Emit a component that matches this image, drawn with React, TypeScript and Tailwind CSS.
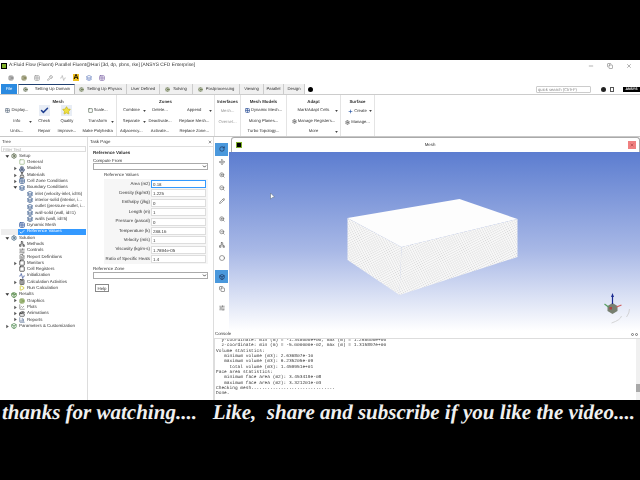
import {
    Activity, BarChart3, Box, Boxes, Calculator, Check, Clapperboard, Cog, Copy, FileText, FlaskConical,
    Grid2x2, Layers, LineChart, Minus, Move, Package, Play, Plus, RotateCw, Settings, SlidersHorizontal,
    Square, Star, Wrench, X, ZoomIn, ZoomOut, Pencil, Network, Circle, ChevronDown,
} from "lucide-react";

const ribbonGroups = [
    { title: "Mesh", w: "w-[117px]", cols: [
        { w: "w-[34px]", items: ["Display...", "Info", "Units..."] },
        { w: "w-[21px]", big: "check", items: ["Check", "Repair"] },
        { w: "w-[25px]", big: "star", items: ["Quality", "Improve..."] },
        { w: "w-[37px]", items: ["Scale...", "Transform", "Make Polyhedra"] },
    ]},
    { title: "Zones", w: "w-[98px]", cols: [
        { w: "w-[29px]", items: ["Combine", "Separate", "Adjacency..."] },
        { w: "w-[29px]", items: ["Delete...", "Deactivate...", "Activate..."] },
        { w: "w-[40px]", items: ["Append", "Replace Mesh...", "Replace Zone..."] },
    ]},
    { title: "Interfaces", w: "w-[26px]", cols: [
        { w: "w-[26px]", muted: true, items: ["Mesh...", "Overset..."] },
    ]},
    { title: "Mesh Models", w: "w-[46px]", cols: [
        { w: "w-[46px]", items: ["Dynamic Mesh...", "Mixing Planes...", "Turbo Topology..."] },
    ]},
    { title: "Adapt", w: "w-[54px]", cols: [
        { w: "w-[54px]", items: ["Mark/Adapt Cells", "Manage Registers...", "More"] },
    ]},
    { title: "Surface", w: "w-[34px]", cols: [
        { w: "w-[34px]", items: ["Create", "Manage..."] },
    ]},
];

const ribbonIcons: Record<string, { Icon: typeof Cog; c: string }> = {
    "Display...": { Icon: Grid2x2, c: "text-[#667788]" },
    "Scale...": { Icon: Square, c: "text-[#556655]" },
    "Dynamic Mesh...": { Icon: Grid2x2, c: "text-[#2a4f96]" },
    "Manage Registers...": { Icon: Settings, c: "text-[#555555]" },
    "Create": { Icon: Plus, c: "text-[#1f4fa0]" },
    "Manage...": { Icon: Settings, c: "text-[#555555]" },
};

const carets = [
    "left-[29px] top-[26px]",
    "left-[111px] top-[26px]",
    "left-[143px] top-[15px]",
    "left-[143px] top-[26px]",
    "left-[209px] top-[15px]",
    "left-[335px] top-[15px]",
    "left-[335px] top-[36px]",
    "left-[369px] top-[15px]",
];

const tabs = [
    { label: "Setting Up Physics", w: "w-[52px]", icon: true },
    { label: "User Defined", w: "w-[33px]" },
    { label: "Solving", w: "w-[33px]", icon: true },
    { label: "Postprocessing", w: "w-[47px]", icon: true },
    { label: "Viewing", w: "w-[24px]" },
    { label: "Parallel", w: "w-[20px]" },
    { label: "Design", w: "w-[21px]" },
];

const tree = [
    { t: "Setup", l: 0, open: true, Icon: Settings, c: "text-[#4b5a3a]" },
    { t: "General", l: 1, Icon: Square, c: "text-[#9db98a]" },
    { t: "Models", l: 1, arrow: true, Icon: Boxes, c: "text-[#5a6a8a]" },
    { t: "Materials", l: 1, arrow: true, Icon: FlaskConical, c: "text-[#555555]" },
    { t: "Cell Zone Conditions", l: 1, arrow: true, Icon: Grid2x2, c: "text-[#33558a]" },
    { t: "Boundary Conditions", l: 1, open: true, Icon: Layers, c: "text-[#33558a]" },
    { t: "inlet (velocity-inlet, id=6)", l: 2, Icon: Layers, c: "text-[#33558a]" },
    { t: "interior-solid (interior, i...", l: 2, Icon: Layers, c: "text-[#33558a]" },
    { t: "outlet (pressure-outlet, i...", l: 2, Icon: Layers, c: "text-[#33558a]" },
    { t: "wall-solid (wall, id=1)", l: 2, Icon: Layers, c: "text-[#33558a]" },
    { t: "walls (wall, id=5)", l: 2, Icon: Layers, c: "text-[#33558a]" },
    { t: "Dynamic Mesh", l: 1, Icon: Grid2x2, c: "text-[#2a4f96]" },
    { t: "Reference Values", l: 1, selected: true, Icon: Check, c: "text-white" },
    { t: "Solution", l: 0, open: true, Icon: Settings, c: "text-[#3b5f7a]" },
    { t: "Methods", l: 1, Icon: Network, c: "text-[#555555]" },
    { t: "Controls", l: 1, Icon: SlidersHorizontal, c: "text-[#777777]" },
    { t: "Report Definitions", l: 1, Icon: FileText, c: "text-[#777777]" },
    { t: "Monitors", l: 1, arrow: true, Icon: Square, c: "text-[#333333]" },
    { t: "Cell Registers", l: 1, Icon: Square, c: "text-[#333333]" },
    { t: "Initialization", l: 1, Icon: Activity, c: "text-[#4a5fa0]" },
    { t: "Calculation Activities", l: 1, arrow: true, Icon: Calculator, c: "text-[#444444]" },
    { t: "Run Calculation", l: 1, Icon: Play, c: "text-[#c8c020]" },
    { t: "Results", l: 0, open: true, Icon: Package, c: "text-[#3f7a30]" },
    { t: "Graphics", l: 1, arrow: true, Icon: Cog, c: "text-[#7a9a4a]" },
    { t: "Plots", l: 1, arrow: true, Icon: LineChart, c: "text-[#888888]" },
    { t: "Animations", l: 1, arrow: true, Icon: Clapperboard, c: "text-[#444444]" },
    { t: "Reports", l: 1, arrow: true, Icon: BarChart3, c: "text-[#6a7fa0]" },
    { t: "Parameters & Customization", l: 0, arrow: true, Icon: Box, c: "text-[#4f8a50]" },
];

const levelPad = ["pl-[4px]", "pl-[12px]", "pl-[20px]"];

const refValues = [
    ["Area (m2)", "0.18"],
    ["Density (kg/m3)", "1.225"],
    ["Enthalpy (j/kg)", "0"],
    ["Length (m)", "1"],
    ["Pressure (pascal)", "0"],
    ["Temperature (k)", "288.16"],
    ["Velocity (m/s)", "1"],
    ["Viscosity (kg/m-s)", "1.7894e-05"],
    ["Ratio of Specific Heats", "1.4"],
];

const consoleLines = [
    "  y-coordinate: min (m) = -1.348000e+00, max (m) = 1.268000e+00",
    "  z-coordinate: min (m) = -5.000000e-02, max (m) = 1.315897e+00",
    "Volume statistics:",
    "   minimum volume (m3): 2.636807e-10",
    "   maximum volume (m3): 6.235205e-09",
    "     total volume (m3): 1.459951e+01",
    "Face area statistics:",
    "   minimum face area (m2): 3.453419e-08",
    "   maximum face area (m2): 3.321201e-03",
    "Checking mesh...............................",
    "Done.",
];

const viewTools = [
    { Icon: RotateCw, on: true },
    { Icon: Move },
    { Icon: ZoomIn },
    { Icon: ZoomOut },
    { Icon: Pencil, gap: "mb-[6px]" },
    { Icon: ZoomIn },
    { Icon: ZoomOut },
    { Icon: Network },
    { Icon: Circle, gap: "mb-[6px]" },
    { Icon: Box, on: true },
    { Icon: Copy, gap: "mb-[6px]" },
    { Icon: SlidersHorizontal },
];

function Arrow({ open }: { open?: boolean }) {
    return (
        <svg viewBox="0 0 6 6" className="w-[5px] h-[5px] shrink-0">
            {open ? <path d="M0.5 1.5 H5 L2.8 4.5 Z" fill="#333" /> : <path d="M1.5 0.8 L4.5 3 L1.5 5.2 Z" fill="#555" />}
        </svg>
    );
}

function ComboBox() {
    return (
        <div className="mx-[4px] h-[7px] w-[115px] border border-[#aaaaaa] bg-white flex justify-end items-center">
            <ChevronDown className="w-[5px] h-[5px] text-[#333333]" strokeWidth={4} />
        </div>
    );
}

function RibbonItem({ text }: { text: string }) {
    const deco = ribbonIcons[text];
    return (
        <span className="flex items-center gap-[1px]">
            {deco && <deco.Icon className={`w-[5px] h-[5px] ${deco.c}`} strokeWidth={3} />}
            {text}
        </span>
    );
}

export default function App() {
    return (
        <div className="w-[640px] h-[480px] bg-black flex flex-col overflow-hidden font-['Liberation_Sans',sans-serif] text-[#333333] text-[4.4px] [text-rendering:geometricPrecision]">
            <div className="h-[60px] shrink-0" />

            <div className="h-[340px] shrink-0 bg-white flex flex-col blur-[0.25px]">
                {/* title bar */}
                <div className="h-[11px] flex items-center pl-[1px] pr-[8px]">
                    <div className="w-[6px] h-[6px] bg-[#7fb02a] border border-black mr-[2px]" />
                    <span className="text-[4.85px]">A:Fluid Flow (Fluent) Parallel Fluent@Hari  [3d, dp, pbns, rke] [ANSYS CFD Enterprise]</span>
                    <div className="ml-auto flex items-center gap-[13px] text-[#666666]">
                        <Minus className="w-[6px] h-[6px]" />
                        <Copy className="w-[6px] h-[6px]" />
                        <X className="w-[6px] h-[6px]" />
                    </div>
                </div>

                {/* quick access */}
                <div className="h-[13px] flex items-center gap-[7px] pl-[8px] text-[#777777]">
                    <Cog className="w-[6px] h-[6px] text-[#666666]" />
                    <Cog className="w-[6px] h-[6px] text-[#5a5a20]" />
                    <Grid2x2 className="w-[6px] h-[6px]" />
                    <Wrench className="w-[6px] h-[6px]" />
                    <Activity className="w-[6px] h-[6px] text-[#999999]" />
                    <span className="w-[6px] h-[7px] text-[7px] leading-[7px] font-bold text-black bg-[#f0c020] text-center">A</span>
                    <Layers className="w-[6px] h-[6px] text-[#3355aa]" />
                    <Grid2x2 className="w-[6px] h-[6px] text-[#553388]" />
                </div>

                {/* tabs */}
                <div className="h-[11px] flex items-stretch border-b border-[#cccccc] pl-[1px] text-[4.2px]">
                    <div className="w-[16px] bg-[#2a8ae0] text-white flex items-center justify-center mr-[1px]">File</div>
                    <div className="w-[57px] border-t border-t-[#1f3f70] border-x border-x-[#bbbbbb] bg-white flex items-center gap-[7px] pl-[4px]">
                        <Cog className="w-[5px] h-[5px] text-[#4b5a3a]" />
                        <span>Setting Up Domain</span>
                    </div>
                    {tabs.map((tab) => (
                        <div key={tab.label} className={`${tab.w} bg-[#f0f0f0] border-r border-[#cccccc] flex items-center justify-center gap-[3px] whitespace-nowrap`}>
                            {tab.icon && <Cog className="w-[5px] h-[5px] text-[#5a6a3a]" />}
                            <span>{tab.label}</span>
                        </div>
                    ))}
                    <div className="ml-[3px] flex items-center">
                        <div className="w-[5px] h-[5px] rounded-full bg-black" />
                    </div>
                    <div className="ml-auto flex items-center">
                        <div className="w-[55px] h-[7px] border border-[#cccccc] rounded-[1px] text-[4.2px] leading-[5px] text-[#888888] pl-[1px] mr-[10px]">quick search (Ctrl+F)</div>
                        <div className="w-[5px] h-[5px] rounded-full bg-[#222222] mr-[4px]" />
                        <div className="w-[4px] h-[5px] border border-[#555555] mr-[9px]" />
                        <div className="w-[17px] h-[5px] bg-black text-white text-[3.5px] leading-[5px] font-bold text-center">ANSYS</div>
                    </div>
                </div>

                {/* ribbon */}
                <div className="h-[42px] relative flex border-b border-[#c8c8c8]">
                    {ribbonGroups.map((group) => (
                        <div key={group.title} className={`${group.w} border-r border-[#e4e4e4] flex flex-col items-center pt-[4px]`}>
                            <div className="font-bold text-[4.4px] h-[7px] leading-[6px]">{group.title}</div>
                            <div className="flex w-full">
                                {group.cols.map((col, i) => (
                                    <div key={i} className={`${col.w} flex flex-col items-center text-[4.2px] whitespace-nowrap ${col.muted ? "text-[#999999]" : ""}`}>
                                        {col.big ? (
                                            <div className="h-[11px] flex items-center">
                                                <div className="w-[11px] h-[11px] bg-[#e8edf5] flex items-center justify-center">
                                                    {col.big === "check"
                                                        ? <Check className="w-[9px] h-[9px] text-[#1f3f90]" strokeWidth={4} />
                                                        : <Star className="w-[9px] h-[9px] text-[#c8b820] fill-[#f0e040]" />}
                                                </div>
                                            </div>
                                        ) : (
                                            <div className="h-[11px] leading-[10px]"><RibbonItem text={col.items[0]} /></div>
                                        )}
                                        {col.items.slice(col.big ? 0 : 1).map((item) => (
                                            <div key={item} className="h-[10px] leading-[10px]"><RibbonItem text={item} /></div>
                                        ))}
                                    </div>
                                ))}
                            </div>
                        </div>
                    ))}
                    {carets.map((pos) => (
                        <svg key={pos} viewBox="0 0 4 3" className={`absolute w-[3px] h-[2px] ${pos}`}>
                            <path d="M0 0 H4 L2 3 Z" fill="#444" />
                        </svg>
                    ))}
                </div>

                {/* panes */}
                <div className="h-[263px] flex">
                    {/* tree */}
                    <div className="w-[88px] shrink-0 border-r border-[#dddddd] flex flex-col pl-[1px] pr-[1px]">
                        <div className="h-[9px] leading-[8px] pl-[1px] pt-[1px]">Tree</div>
                        <div className="h-[6px] leading-[5px] border border-[#dddddd] text-[#aaaaaa] pl-[1px] text-[4.2px] mb-[1px]">Filter Text</div>
                        {tree.map((row) => (
                            <div key={row.t} className={`h-[6.3px] flex items-center whitespace-nowrap ${levelPad[row.l]} ${row.selected ? "bg-[linear-gradient(90deg,#eeeeee_20%,#3399ff_20%)]" : ""}`}>
                                <span className="w-[5px] shrink-0">{(row.arrow || row.open) && <Arrow open={row.open} />}</span>
                                <row.Icon className={`w-[6px] h-[6px] ml-[1px] mr-[2px] shrink-0 ${row.c}`} strokeWidth={3} />
                                <span className={row.selected ? "text-white" : ""}>{row.t}</span>
                            </div>
                        ))}
                    </div>

                    {/* task page */}
                    <div className="w-[125px] shrink-0 border-r border-[#dddddd] ml-[1px] flex flex-col">
                        <div className="h-[9px] leading-[8px] pl-[1px] pt-[1px] flex justify-between pr-[1px]">
                            <span>Task Page</span>
                            <X className="w-[4px] h-[4px] mt-[2px] text-[#666666]" strokeWidth={4} />
                        </div>
                        <div className="border-t border-[#e0e0e0] pt-[1px]">
                            <div className="pl-[4px] font-bold text-[4.5px] h-[8px] leading-[9px]">Reference Values</div>
                            <div className="pl-[4px] h-[7px] leading-[9px]">Compute From</div>
                            <ComboBox />
                            <div className="pl-[15px] h-[8px] leading-[8px] mt-[1px]">Reference Values</div>
                            <div className="ml-[15px] mr-[5px] w-[104px] bg-[#f6f6f6] flex flex-col gap-[1.4px] pt-[1px] pb-[1px] items-stretch">
                                {refValues.map(([label, value], i) => (
                                    <div key={label} className="h-[8px] flex items-center justify-end pr-[2px]">
                                        <span className="whitespace-nowrap mr-[1px]">{label}</span>
                                        <div className={`w-[55px] h-[8px] shrink-0 leading-[7px] pl-[1px] bg-white border ${i === 0 ? "border-[#3399ff]" : "border-[#dddddd]"}`}>{value}</div>
                                    </div>
                                ))}
                            </div>
                            <div className="pl-[4px] h-[7px] leading-[7px] mt-[1px]">Reference Zone</div>
                            <ComboBox />
                            <div className="ml-[6px] mt-[5px] w-[14px] h-[8px] border border-[#888888] text-center leading-[7px]">Help</div>
                        </div>
                    </div>

                    {/* graphics + console */}
                    <div className="flex-1 flex flex-col min-w-0">
                        <div className="h-[194px] flex">
                            <div className="w-[15px] shrink-0 pl-[1px] pt-[6px] flex flex-col">
                                {viewTools.map(({ Icon, on, gap }, i) => (
                                    <div key={i} className={`w-[13px] h-[12.8px] shrink-0 flex items-center justify-center ${on ? "bg-[#4a98dc]" : ""} ${gap ?? ""}`}>
                                        <Icon className={`w-[6px] h-[6px] ${on ? "text-[#1a2a50]" : "text-[#666666]"}`} strokeWidth={2.5} />
                                    </div>
                                ))}
                            </div>
                            <div className="flex-1 flex flex-col min-w-0">
                                <div className="h-[15px] rounded-t-[3px] border-t border-x border-[#aaaaaa] ml-[2px] flex items-center pl-[4px] pr-[3px]">
                                    <div className="w-[6px] h-[6px] bg-black border border-[#7fb02a]" />
                                    <span className="flex-1 text-center pr-[10px]">Mesh</span>
                                    <div className="w-[8px] h-[8px] bg-[#f08080] flex items-center justify-center">
                                        <X className="w-[4px] h-[4px] text-[#993333]" strokeWidth={3} />
                                    </div>
                                </div>
                                <div className="flex-1 relative bg-[linear-gradient(180deg,#5c7dd0_0%,#a8b8e6_55%,#ffffff_100%)]">
                                    <svg viewBox="0 0 410 179" className="absolute inset-0 w-full h-full">
                                        <defs>
                                            <pattern id="meshdots" width="1.6" height="1.6" patternUnits="userSpaceOnUse" patternTransform="rotate(20)">
                                                <rect width="1.6" height="1.6" fill="#f8f8f8" />
                                                <rect width="0.8" height="0.8" fill="#d8d8d8" />
                                            </pattern>
                                        </defs>
                                        <path d="M118 66 L230 47 L288 67 L172 95 Z" fill="#fdfdfd" />
                                        <path d="M118 66 L172 95 L170 143 L118 108 Z" fill="url(#meshdots)" />
                                        <path d="M172 95 L288 67 L288 105 L170 143 Z" fill="url(#meshdots)" />
                                        <path d="M41 41 L41 47 L43 45.5 L45 45 Z" fill="#ffffff" stroke="#556677" strokeWidth="0.5" />
                                        {/* triad */}
                                        <g transform="translate(383 154)">
                                            <path d="M-5 0 L0 -3 L5 0 L5 5 L0 8 L-5 5 Z" fill="#777f70" />
                                            <path d="M0 -2 V-9" stroke="#1a2a90" strokeWidth="1.2" />
                                            <path d="M-1.5 -9 L0 -13 L1.5 -9 Z" fill="#1a2a90" />
                                            <path d="M4 1 L9 -1" stroke="#d06060" strokeWidth="1.2" />
                                            <path d="M-4 1 L-8 -2" stroke="#55a060" strokeWidth="1.2" />
                                            <rect x="-3" y="1" width="2.5" height="2.5" fill="#b04040" />
                                            <path d="M-1 17 Q8 14 9 10 M14 11 Q17 7 17 3" stroke="#cccccc" fill="none" strokeWidth="0.8" />
                                        </g>
                                    </svg>
                                </div>
                            </div>
                        </div>

                        <div className="flex-1 flex flex-col min-h-0">
                            <div className="h-[7px] flex justify-between items-center pl-[1px] pr-[2px]">
                                <span>Console</span>
                                <div className="flex gap-[1px]">
                                    <div className="w-[3px] h-[3px] rounded-full border border-[#777777]" />
                                    <div className="w-[3px] h-[3px] rounded-full border border-[#777777]" />
                                </div>
                            </div>
                            <div className="flex-1 flex border-t border-l border-[#dddddd] overflow-hidden">
                                <div className="flex-1 -mt-[1px] font-['Liberation_Mono',monospace] text-[4.5px] leading-[5.35px] whitespace-pre pl-[1px]">
                                    {consoleLines.map((line) => <div key={line}>{line}</div>)}
                                </div>
                                <div className="w-[4px] bg-[#f0f0f0] flex flex-col pt-[45px]">
                                    <div className="h-[8px] bg-[#a8a8a8]" />
                                </div>
                            </div>
                        </div>
                    </div>
                </div>
            </div>

            {/* caption */}
            <div className="h-[80px] shrink-0 pl-[2px] font-['Liberation_Serif',serif] font-bold italic text-[21px] leading-[24px] text-[#f0f0f0] whitespace-pre">
                thanks for watching....   Like,  share and subscribe if you like the video....
            </div>
        </div>
    );
}
